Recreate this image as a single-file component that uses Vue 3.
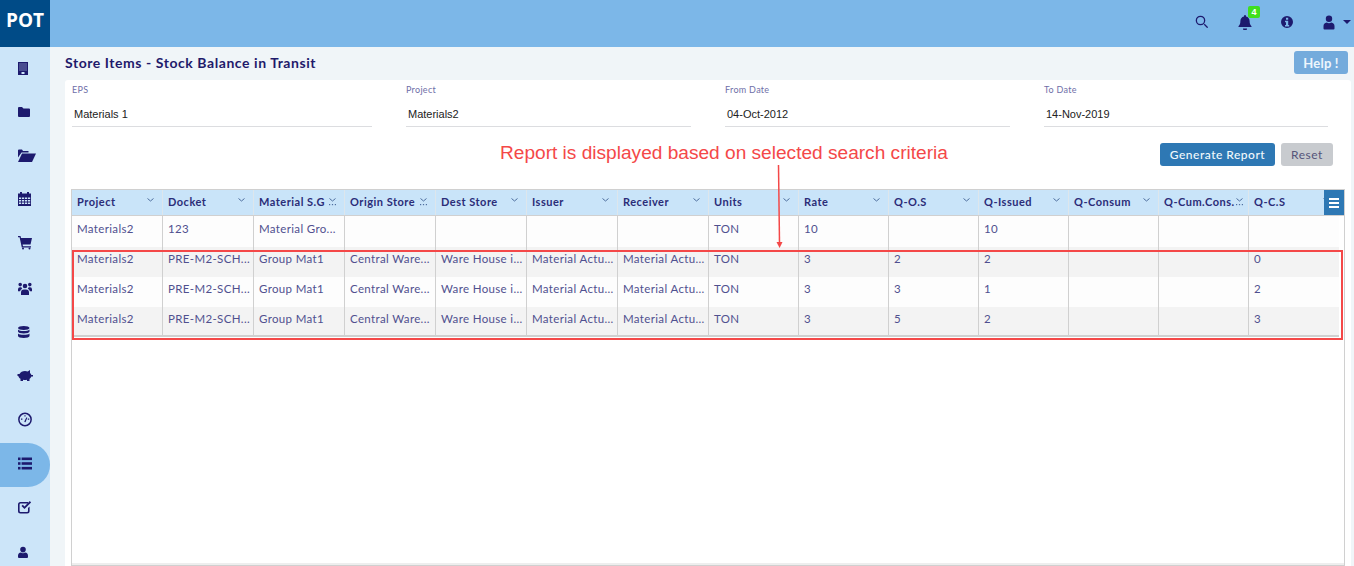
<template>
  <div class="app-shell">
    <header class="topbar">
      <div class="logo">POT</div>
      <div class="top-actions">
        <button class="top-btn" v-for="item in topIcons" :key="item.name">
          <svg width="16" height="16" viewBox="0 0 16 16"><path v-for="d in item.paths" :key="d" :d="d" fill-rule="evenodd" /></svg>
          <span v-if="item.badge" class="badge">{{ item.badge }}</span>
        </button>
        <span class="caret"></span>
      </div>
    </header>

    <div class="body-row">
      <!-- side menu -->
      <aside class="sidebar">
        <a v-for="(item, i) in sideIcons" :key="i" class="side-item" :class="{ active: i === 9 }">
          <svg width="24" height="24" viewBox="0 0 24 24"><path v-for="d in item" :key="d" :d="d" fill-rule="evenodd" /></svg>
        </a>
      </aside>

      <main class="content">
        <div class="title-row">
          <h1>Store Items - Stock Balance in Transit</h1>
          <button class="help-btn">Help !</button>
        </div>

        <section class="card">
          <div class="filters">
            <div class="field" v-for="f in filters" :key="f.label">
              <label>{{ f.label }}</label>
              <div class="value">{{ f.value }}</div>
            </div>
          </div>

          <div class="actions">
            <button class="btn-primary">Generate Report</button>
            <button class="btn-reset">Reset</button>
          </div>

          <div class="grid">
            <div class="grid-head">
              <div class="head-cell" v-for="col in columns" :key="col.name">
                <span>{{ col.name }}</span>
                <svg width="9" height="10" viewBox="0 0 9 10" class="chev">
                  <path d="M1.5 1.5L4.5 4L7.5 1.5" fill="none" stroke="#4f6f9f" stroke-width="1" />
                  <g v-if="col.dots" fill="#4f6f9f">
                    <rect x="1" y="7" width="1.2" height="1.2" />
                    <rect x="3.9" y="7" width="1.2" height="1.2" />
                    <rect x="6.8" y="7" width="1.2" height="1.2" />
                  </g>
                </svg>
              </div>
              <button class="menu-btn"><i></i><i></i><i></i></button>
            </div>
            <div class="grid-row" v-for="(row, r) in rows" :key="r" :class="{ first: r === 0, odd: r % 2 === 1 }">
              <div class="cell" v-for="(val, c) in row" :key="c">{{ val }}</div>
            </div>
          </div>
        </section>
      </main>
    </div>

    <!-- annotation drawn on top of the screenshot -->
    <div class="note">Report is displayed based on selected search criteria</div>
    <svg class="note-arrow" width="12" height="90" viewBox="0 0 12 90">
      <path d="M5.5 1L6.5 79" stroke="#f44848" stroke-width="1.5" fill="none" />
      <path d="M3.5 78L9.5 78L6.6 84z" fill="#f44848" />
    </svg>
    <div class="note-box"></div>
  </div>
</template>

<script setup>
// little helpers for the icon paths
const sq = (x, y, w, h) => `M${x} ${y}h${w}v${h}h${-w}z`
const circle = (cx, cy, r) => `M${cx - r} ${cy}a${r} ${r} 0 1 0 ${r * 2} 0a${r} ${r} 0 1 0 ${-r * 2} 0z`

function cells(xs, ys, w, h) {
  let out = ''
  for (const y of ys) for (const x of xs) out += sq(x, y, w, h)
  return out
}

const topIcons = [
  {
    name: 'search',
    paths: [
      circle(5.5, 6.5, 4.8) + circle(5.5, 6.5, 3.5),
      'M8.8 10.7l.9-.9 3 3a.6.6 0 0 1-.9.9z'
    ]
  },
  {
    name: 'bell',
    badge: '4',
    paths: ['M8 1a1 1 0 0 1 1 1v.4c2.4.5 3.6 2.3 3.6 4.6 0 3 .8 4 1.9 5.2v.8H1.5v-.8C2.6 11 3.4 10 3.4 7c0-2.3 1.2-4.1 3.6-4.6V2a1 1 0 0 1 1-1z', 'M6 14.5h4a2 2 0 0 1-4 0z']
  },
  {
    name: 'info',
    paths: [circle(8, 8, 6) + sq(7, 3.8, 2.2, 2) + 'M6 6.8h3.2v4.2h1v1.4H6V11h1V8.3H6z']
  },
  {
    name: 'user',
    paths: [circle(8, 4.8, 3.2), 'M2.5 14.5v-2.3a3.8 3.8 0 0 1 3.3-3.8c.7.5 1.4.8 2.2.8s1.5-.3 2.2-.8a3.8 3.8 0 0 1 3.3 3.8v2.3a1 1 0 0 1-1 1h-9a1 1 0 0 1-1-1z']
  }
]

const sideIcons = [
  // building
  [sq(5, 5, 10, 13) + cells([6.5, 8.5, 10.5, 12.5], [6.5, 8.5, 10.5, 12.5], 1, 1) + sq(8.5, 15, 3, 2)],
  // folder
  ['M5 7a1 1 0 0 1 1-1h3l1.5 1.5H16a1 1 0 0 1 1 1V15a1 1 0 0 1-1 1H6a1 1 0 0 1-1-1z'],
  // folder open
  ['M5 5.5a1 1 0 0 1 1-1h3l1 1.5h5.5v1.5H8.5L5 12.5z', 'M9 8.5h14L19 17H5z'],
  // calendar
  [sq(7, 3, 2, 2), sq(14, 3, 2, 2), sq(5, 4.5, 13, 12.5) + cells([6, 9, 12, 15], [8.5, 11, 13.5], 2.2, 1.4)],
  // cart
  ['M5 3h2.5l.5 2h11l-1.5 6.5H9.6l.4 1.7H18v1.2H8.8L6.6 4.2H5z', circle(10, 15.6, 1), circle(16.5, 15.6, 1)],
  // users
  [circle(12, 9, 2.3), circle(7.2, 7.6, 1.8), circle(16.8, 7.6, 1.8), 'M8 18v-2.5a3 3 0 0 1 3-3h2a3 3 0 0 1 3 3V18z', 'M5 14.2v-2a2 2 0 0 1 2-2h1.4a3.4 3.4 0 0 0 .8 1.6A4 4 0 0 0 7 14.2z', 'M19 14.2v-2a2 2 0 0 0-2-2h-1.4a3.4 3.4 0 0 1-.8 1.6 4 4 0 0 1 2.2 2.4z'],
  // database
  ['M5 7c0-1.2 2.6-2 5.75-2s5.75.8 5.75 2-2.6 2-5.75 2S5 8.2 5 7z', 'M5 8.6c1 1 3 1.5 5.75 1.5s4.75-.5 5.75-1.5v2c0 1.2-2.6 1.9-5.75 1.9S5 11.8 5 10.6z', 'M5 12.4c1 1 3 1.4 5.75 1.4s4.75-.4 5.75-1.4v2.6c0 1.2-2.6 2-5.75 2S5 16.2 5 15z'],
  // piggy bank
  ['M4.5 9h2c1-2 3-3 5.5-3 1 0 2 .2 2.7.5L17 5v3c.8.6 1.2 1.2 1.4 2H20v1.5h-1.6c-.3 1-1 1.8-1.9 2.4V16h-2.5v-1.2a9 9 0 0 1-4 0V16H7.5v-2.2C6.2 13 5.6 12 5.3 11H4.5z'],
  // gauge
  [circle(12, 10.5, 6.9) + circle(12, 10.5, 5.4), sq(11.4, 6.2, 1.2, 1.4), sq(8, 9.6, 1.4, 1.2), sq(14.8, 9.6, 1.4, 1.2), 'M11.3 12.5l2.2-4.2.8.4-1.7 4.4a1 1 0 0 1-1.3-.6z'],
  // list
  [sq(5, 4.5, 2.5, 2.6), sq(8.6, 4.5, 10.4, 2.6), sq(5, 9.2, 2.5, 2.6), sq(8.6, 9.2, 10.4, 2.6), sq(5, 13.9, 2.5, 2.6), sq(8.6, 13.9, 10.4, 2.6)],
  // check square
  ['M7.5 5H15v1.6H7.5a.9.9 0 0 0-.9.9v6.6c0 .5.4.9.9.9h6.6a.9.9 0 0 0 .9-.9V11l1.6-1.5v4.6a2.5 2.5 0 0 1-2.5 2.5H7.5A2.5 2.5 0 0 1 5 14.1V7.5A2.5 2.5 0 0 1 7.5 5z', 'M8.5 9l1.3-1.3 1.7 1.7 5.3-5.3L18.1 5.4l-6.6 6.6z'],
  // user
  [circle(10, 8.6, 2.8), 'M5 15a3.4 3.4 0 0 1 3-3.4c.6.5 1.3.7 2 .7s1.4-.2 2-.7a3.4 3.4 0 0 1 3 3.4v1a1 1 0 0 1-1 1H6a1 1 0 0 1-1-1z']
]

const filters = [
  { label: 'EPS', value: 'Materials 1' },
  { label: 'Project', value: 'Materials2' },
  { label: 'From Date', value: '04-Oct-2012' },
  { label: 'To Date', value: '14-Nov-2019' }
]

const columns = [
  { name: 'Project' },
  { name: 'Docket' },
  { name: 'Material S.G', dots: true },
  { name: 'Origin Store', dots: true },
  { name: 'Dest Store' },
  { name: 'Issuer' },
  { name: 'Receiver' },
  { name: 'Units' },
  { name: 'Rate' },
  { name: 'Q-O.S' },
  { name: 'Q-Issued' },
  { name: 'Q-Consum' },
  { name: 'Q-Cum.Cons.', dots: true },
  { name: 'Q-C.S' }
]

const stockRow = (os, issued, cs) => [
  'Materials2', 'PRE-M2-SCH...', 'Group Mat1', 'Central Ware...', 'Ware House i...',
  'Material Actu...', 'Material Actu...', 'TON', '3', os, issued, '', '', cs
]

const rows = [
  ['Materials2', '123', 'Material Gro...', '', '', '', '', 'TON', '10', '', '10', '', '', ''],
  stockRow('2', '2', '0'),
  stockRow('3', '1', '2'),
  stockRow('5', '2', '3')
]
</script>

<style>
html, body {
  margin: 0;
  height: 100%;
  overflow: hidden;
}
</style>

<style scoped>
.app-shell {
  position: relative;
  height: 566px;
  overflow: hidden;
  display: flex;
  flex-direction: column;
  font-family: Lato, "Liberation Sans", sans-serif;
  background: #f0f5f8;
}

.topbar {
  height: 47px;
  flex: none;
  display: flex;
  justify-content: space-between;
  background: #7cb7e8;
}

.logo {
  width: 50px;
  background: #004b87;
  color: #fff;
  font-family: "Open Sans", sans-serif;
  font-size: 19px;
  font-weight: 700;
  line-height: 41px;
  text-align: center;
}

.top-actions {
  display: flex;
  align-items: center;
  gap: 18px;
  padding-right: 3px;
  padding-bottom: 3px;
}

.top-btn {
  position: relative;
  width: 24px;
  height: 24px;
  padding: 0;
  border: 0;
  background: none;
  display: flex;
  align-items: center;
  justify-content: center;
  fill: #1d1a6e;
}

.badge {
  position: absolute;
  top: -4px;
  left: 15px;
  width: 12px;
  height: 12px;
  border-radius: 2px;
  background: #3fdf1f;
  color: #fff;
  font-size: 9px;
  font-weight: 700;
  line-height: 12px;
  text-align: center;
}

.caret {
  width: 0;
  height: 0;
  margin-left: -16px;
  border-left: 4px solid transparent;
  border-right: 4px solid transparent;
  border-top: 4px solid #1d1a6e;
}

.body-row {
  flex: 1;
  display: flex;
  min-height: 0;
}

.sidebar {
  width: 50px;
  flex: none;
  background: #cce5f9;
}

.side-item {
  height: 44px;
  display: flex;
  align-items: center;
  justify-content: center;
  fill: #1d1a6e;
}

.side-item svg {
  margin-top: -1px;
}

.side-item.active {
  background: #7cb7e8;
  border-radius: 0 22px 22px 0;
}

.content {
  flex: 1;
  min-width: 0;
  padding: 0 3px 0 15px;
  display: flex;
  flex-direction: column;
}

.title-row {
  height: 31px;
  padding-bottom: 2px;
  flex: none;
  display: flex;
  align-items: center;
  justify-content: space-between;
  padding-right: 3px;
}

.title-row h1 {
  margin: 0;
  font-size: 14px;
  font-weight: 700;
  letter-spacing: 0.56px;
  color: #1f1a6b;
}

.help-btn {
  width: 54px;
  height: 23px;
  padding: 0;
  border: 0;
  border-radius: 3px;
  background: #74abdc;
  color: #eef6fc;
  font-family: inherit;
  font-size: 13px;
  font-weight: 700;
  letter-spacing: 0.2px;
}

.card {
  flex: 1;
  min-height: 0;
  background: #fff;
  border-radius: 3px 3px 0 0;
  padding: 0 6px;
  display: flex;
  flex-direction: column;
}

.filters {
  display: grid;
  grid-template-columns: 300px 285px 285px 284px;
  column-gap: 34px;
  padding-left: 1px;
  padding-top: 4px;
}

.field label {
  display: block;
  font-size: 9px;
  line-height: 11px;
  letter-spacing: 0.3px;
  color: #6f6fa8;
}

.field .value {
  height: 32px;
  box-sizing: border-box;
  padding: 12px 2px 0;
  border-bottom: 1px solid #dcdde0;
  font-family: "Liberation Sans", sans-serif;
  font-size: 11px;
  line-height: 14px;
  color: #222;
}

.actions {
  display: flex;
  justify-content: flex-end;
  gap: 6px;
  padding: 16px 12px 0 0;
  height: 23px;
}

.actions button {
  height: 23px;
  padding: 0;
  border: 0;
  border-radius: 3px;
  font-family: inherit;
  font-size: 12px;
  letter-spacing: 0.5px;
}

.btn-primary {
  width: 115px;
  background: #2e78b4;
  color: #f2f8fc;
  font-weight: 500;
}

.btn-reset {
  width: 52px;
  background: #c8cbcf;
  color: #55557a;
}

.grid {
  position: relative;
  flex: 1;
  margin-top: 23px;
  border: 1px solid #d0d0d0;
  box-shadow: inset 0 -2px 0 #eeeeee;
  background: #fff;
}

.grid-head {
  position: relative;
  display: grid;
  grid-template-columns: repeat(7, 91px) repeat(7, 90px);
  height: 25px;
  background: #c9e4f9;
  border-bottom: 1px solid #d0d0d0;
}

.head-cell {
  display: flex;
  justify-content: space-between;
  padding: 0 7px 0 5px;
  border-right: 1px solid #dde6ec;
  color: #2b2d78;
  font-size: 11px;
  font-weight: 700;
  letter-spacing: 0.5px;
  line-height: 24px;
  white-space: nowrap;
  overflow: hidden;
}

.chev {
  flex: none;
  margin-top: 7px;
}

.menu-btn {
  position: absolute;
  top: 0;
  right: 0;
  width: 20px;
  height: 25px;
  padding: 0;
  border: 0;
  background: #2e78b4;
  display: flex;
  flex-direction: column;
  align-items: center;
  justify-content: center;
  gap: 2px;
}

.menu-btn i {
  width: 10px;
  height: 2px;
  background: #fff;
}

.grid-row {
  display: grid;
  grid-template-columns: repeat(7, 91px) repeat(7, 90px);
  height: 30px;
  background: #fdfdfd;
  width: 1267px;
}

.grid-row.first {
  height: 31px;
}

.grid-row.odd {
  background: #f3f3f3;
}

.grid-row:last-child {
  height: 30px;
  box-sizing: border-box;
  border-bottom: 2px solid #d0d0d0;
}

.cell {
  padding: 4px 5px 0;
  border-right: 1px solid #d0d0d0;
  color: #50508f;
  font-size: 11.5px;
  letter-spacing: 0.35px;
  line-height: 16px;
  white-space: nowrap;
  overflow: hidden;
}

.grid-row.first .cell {
  padding-top: 5px;
}

.cell:last-child {
  border-right: 0;
}

.note {
  position: absolute;
  left: 500px;
  top: 142px;
  color: #f44848;
  font-family: "Liberation Sans", sans-serif;
  font-size: 19.1px;
  line-height: 21px;
  white-space: nowrap;
}

.note-arrow {
  position: absolute;
  left: 772.5px;
  top: 164px;
}

.note-box {
  position: absolute;
  left: 72px;
  top: 250px;
  width: 1271px;
  height: 90px;
  box-sizing: border-box;
  border: 2px solid #f44848;
}
</style>
